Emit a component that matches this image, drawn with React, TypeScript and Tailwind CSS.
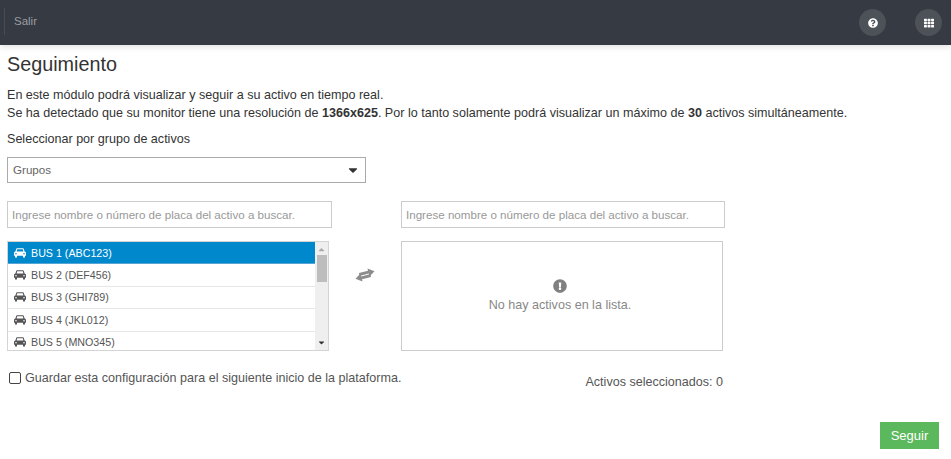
import { FaCaretDown, FaCaretUp, FaExclamationCircle, FaQuestionCircle, FaTh } from 'react-icons/fa'

const buses = ['BUS 1 (ABC123)', 'BUS 2 (DEF456)', 'BUS 3 (GHI789)', 'BUS 4 (JKL012)', 'BUS 5 (MNO345)']
const placeholder = 'Ingrese nombre o número de placa del activo a buscar.'

function CarIcon() {
  return (
    <svg viewBox="0 0 12 10" className="h-[10px] w-[12px] shrink-0" fill="currentColor" fillRule="evenodd">
      <path d="M2.2 1Q2.4.3 3 .3H9Q9.6.3 9.8 1L10.6 3.6Q12 3.9 12 5V7.8H11V9.5H9V7.8H3V9.5H1V7.8H0V5Q0 3.9 1.4 3.6ZM3.2 1.3 2.6 3.5H9.4L8.8 1.3ZM1.2 5.7A.8.8 0 1 0 2.8 5.7.8.8 0 1 0 1.2 5.7ZM9.2 5.7A.8.8 0 1 0 10.8 5.7.8.8 0 1 0 9.2 5.7Z" />
    </svg>
  )
}

function ExchangeIcon() {
  return (
    <svg viewBox="0 0 20 14" className="h-[14px] w-[20px] text-[#8c8c8c]" fill="currentColor">
      <path d="M4 5 13 2.7 12.5.5 19.5 3.3 14.5 8.5 13.8 5.6 4.5 8Z" />
      <path d="M16 9 7 11.3 7.5 13.5 .5 10.7 5.5 5.5 6.2 8.4 15.5 6Z" />
    </svg>
  )
}

export default function App() {
  return (
    <div className="h-[459px] w-[951px] overflow-hidden bg-white font-['Liberation_Sans',Arial,sans-serif] text-[12.57px] text-[#333]">
      {/* Top bar */}
      <header className="flex h-[45px] items-center bg-[#363a42] pl-1 pr-[9px] shadow-[0_2px_6px_rgba(0,0,0,0.12)]">
        <div className="mb-[2px] flex h-[27px] items-center border-l border-[#484c54] pl-[9px] text-[11.5px] text-[#9a9da3]">Salir</div>
        <div className="ml-auto flex gap-[29px]">
          <button className="flex h-[27px] w-[27px] items-center justify-center rounded-full bg-[#4d5158] text-[10px] text-white">
            <FaQuestionCircle />
          </button>
          <button className="flex h-[27px] w-[27px] items-center justify-center rounded-full bg-[#4d5158] text-[10px] text-white">
            <FaTh />
          </button>
        </div>
      </header>

      <main className="px-[7px]">
        <h1 className="mt-[8px] text-[19.8px] leading-[22px] text-[#333]">Seguimiento</h1>
        <p className="mt-[11px] leading-[18px]">
          En este módulo podrá visualizar y seguir a su activo en tiempo real.
          <br />
          Se ha detectado que su monitor tiene una resolución de <b>1366x625</b>. Por lo tanto solamente podrá visualizar un máximo de <b>30</b> activos simultáneamente.
        </p>
        <p className="mt-[8px] leading-[18px]">Seleccionar por grupo de activos</p>

        <div className="mt-[9px] flex h-[26px] w-[359px] items-center justify-between border border-[#aaa] pl-[5px] pr-[5px] text-[11.6px] text-[#666]">
          <span>Grupos</span>
          <FaCaretDown className="text-[14px] text-[#333]" />
        </div>

        <div className="mt-[18px] flex">
          <div className="w-[325px]">
            <div className="flex h-[27px] items-center border border-[#ccc] px-1 text-[11.6px] text-[#999]">{placeholder}</div>
            <div className="mt-[13px] flex h-[110px] w-[322px] overflow-hidden border border-[#d4d4d4]">
              <ul className="min-w-0 flex-1">
                {buses.map((bus, i) => (
                  <li
                    key={bus}
                    className={
                      i === 0
                        ? 'flex h-[22.4px] shrink-0 items-center gap-[5px] border-b border-[#55a5d6] bg-[#0088cc] pl-[6px] text-[10.7px] text-white'
                        : 'flex h-[22.4px] shrink-0 items-center gap-[5px] border-b border-[#e8e8e8] pl-[6px] text-[10.7px] text-[#555]'
                    }
                  >
                    <CarIcon />
                    {bus}
                  </li>
                ))}
              </ul>
              {/* Scrollbar */}
              <div className="flex w-[13px] shrink-0 flex-col items-center bg-[#efefef]">
                <FaCaretUp className="mt-[3px] h-[9px] text-[9px] text-[#aaa]" />
                <div className="mt-[1px] h-[27px] w-[10px] bg-[#bdbdbd]" />
                <FaCaretDown className="mb-[3px] mt-auto h-[9px] text-[9px] text-[#333]" />
              </div>
            </div>
          </div>

          <div className="flex w-[69px] justify-center pr-[3px] pt-[67px]">
            <div className="h-[14px]">
              <ExchangeIcon />
            </div>
          </div>

          <div className="w-[324px]">
            <div className="flex h-[27px] items-center border border-[#ccc] px-1 text-[11.6px] text-[#999]">{placeholder}</div>
            <div className="mt-[13px] flex h-[110px] w-[322px] flex-col items-center border border-[#ccc] pr-[4px] pt-[37px] text-[#888]">
              <FaExclamationCircle className="text-[14px] text-[#808080]" />
              <span className="mt-[4px] leading-[16px]">No hay activos en la lista.</span>
            </div>
          </div>
        </div>

        <div className="flex w-[716px] items-start justify-between">
          <label className="ml-[2px] mt-[19px] flex items-center gap-[4px] leading-[16px] text-[#555]">
            <span className="h-[12px] w-[12px] rounded-[2px] border-[1.5px] border-[#444]" />
            Guardar esta configuración para el siguiente inicio de la plataforma.
          </label>
          <span className="mt-[23px] leading-[16px] text-[#555]">Activos seleccionados: 0</span>
        </div>

        <div className="mr-[5px] mt-[32px] flex justify-end">
          <button className="h-[27px] w-[59px] bg-[#5cb85c] text-[13px] text-white">Seguir</button>
        </div>
      </main>
    </div>
  )
}
